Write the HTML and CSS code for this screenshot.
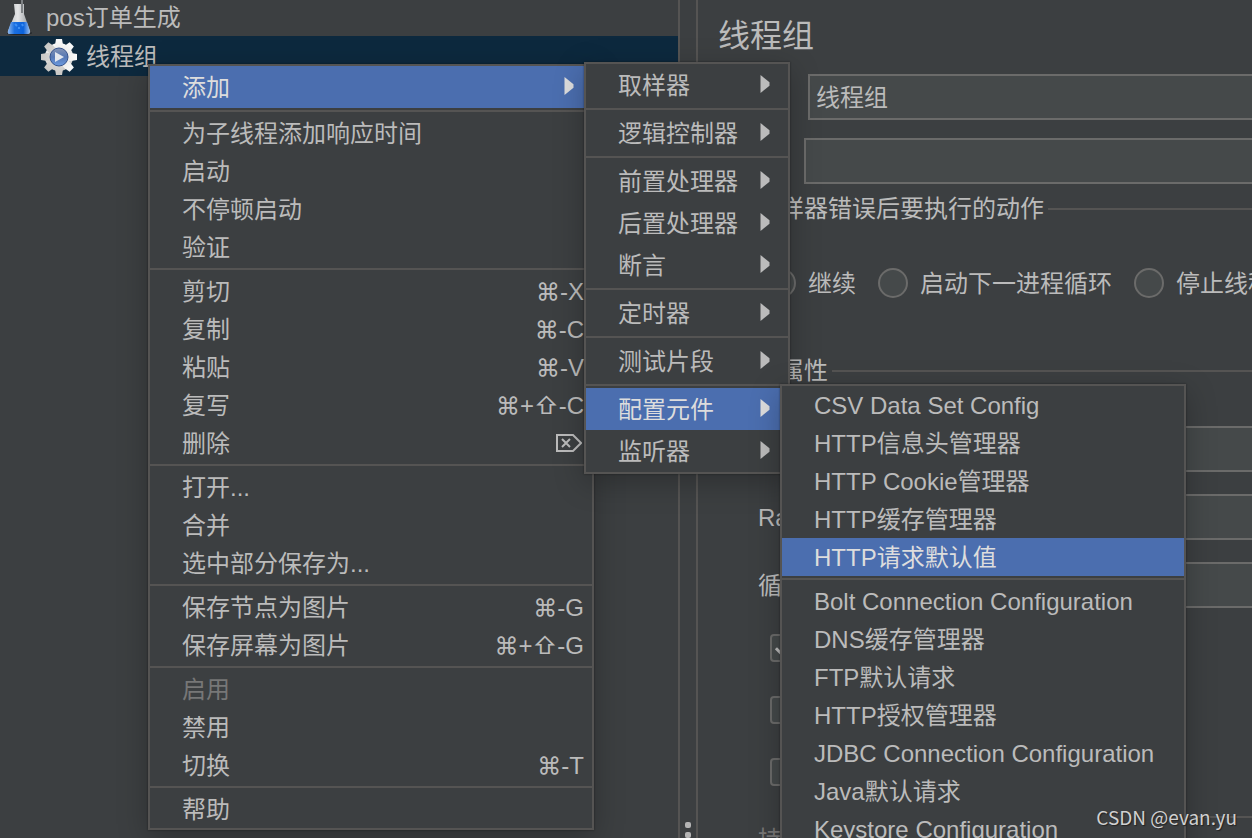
FILE: index.html
```html
<!DOCTYPE html>
<html lang="zh-CN">
<head>
  <meta charset="UTF-8" />
  <meta name="viewport" content="width=device-width, initial-scale=1.0"/>
  <title>线程组</title>
  <link rel="stylesheet" href="styles.css">
</head>
<body>
  <div class="app">
    <ul class="tree">
      <li class="tree-row">
        <svg class="flask" width="26" height="36" viewBox="0 0 26 36">
          <defs>
            <linearGradient id="glass" x1="0" x2="1">
              <stop offset="0" stop-color="#b9bcc0"/>
              <stop offset="0.45" stop-color="#e4e5e6"/>
              <stop offset="1" stop-color="#8e9398"/>
            </linearGradient>
            <linearGradient id="liquid" x1="0" x2="1">
              <stop offset="0" stop-color="#8fb9ee"/>
              <stop offset="0.3" stop-color="#1b6fe0"/>
              <stop offset="0.7" stop-color="#0a62dc"/>
              <stop offset="1" stop-color="#9cc0ee"/>
            </linearGradient>
          </defs>
          <ellipse cx="12" cy="33" rx="13" ry="2" fill="#22262a"/>
          <path d="M7 4h10v10l6 17q1 3-2 3H3q-3 0-2-3L8 14z" fill="url(#glass)"/>
          <path d="M4 22h16l3 9q0 3-3 3H3q-3 0-2-3z" fill="url(#liquid)"/>
          <path d="M15 0v13" stroke="#7d8184" stroke-width="2"/>
          <path d="M8 24l2 2M12 27v2M15 24l1 2" stroke="#3d90f5" stroke-width="2"/>
        </svg>
        <span>pos订单生成</span>
      </li>
      <li class="tree-row child selected">
        <svg class="gear" width="38" height="38" viewBox="-19 -19 38 38">
          <defs>
            <linearGradient id="metal" x1="0" y1="0" x2="0" y2="1">
              <stop offset="0" stop-color="#fbfbfb"/>
              <stop offset="1" stop-color="#c9c7c4"/>
            </linearGradient>
            <linearGradient id="lens" x1="0" y1="0" x2="0" y2="1">
              <stop offset="0" stop-color="#8393b4"/>
              <stop offset="0.5" stop-color="#5577b4"/>
              <stop offset="1" stop-color="#6d9be0"/>
            </linearGradient>
          </defs>
          <g fill="url(#metal)">
            <circle r="14"/>
            <path id="tooth" d="M-4-12l1-6h6l1 6v24l-1 6h-6l-1-6z"/>
            <use href="#tooth" transform="rotate(45)"/>
            <use href="#tooth" transform="rotate(90)"/>
            <use href="#tooth" transform="rotate(135)"/>
          </g>
          <circle r="9" fill="url(#lens)" stroke="#34528c" stroke-width="1"/>
          <path d="M-4-5L5 0l-9 5z" fill="#e3e7ee"/>
        </svg>
        <span>线程组</span>
      </li>
    </ul>

    <div class="splitter"><i></i><i></i></div>

    <main class="panel">
      <h1>线程组</h1>
      <div class="row name-row">
        <label for="name">名称：</label>
        <input type="text" id="name" value="线程组" />
      </div>
      <div class="row comment-row">
        <label for="comment">注释：</label>
        <input type="text" id="comment" />
      </div>

      <h2>在取样器错误后要执行的动作</h2>
      <div class="radios">
        <label><input type="radio" name="onError" />继续</label>
        <label><input type="radio" name="onError" />启动下一进程循环</label>
        <label><input type="radio" name="onError" />停止线程</label>
      </div>

      <h2>线程属性</h2>
      <div class="props">
        <div class="row">
          <label for="threads">线程数：</label>
          <input type="text" id="threads" />
        </div>
        <div class="row">
          <label for="ramp">Ramp-Up：</label>
          <input type="text" id="ramp" />
        </div>
        <div class="row">
          <label for="loops">循环次数</label>
          <input type="text" id="loops" />
        </div>
      </div>
      <div class="checks">
        <input type="checkbox" aria-label="Same user on each iteration" checked />
        <input type="checkbox" aria-label="延迟创建线程直到需要" />
        <input type="checkbox" aria-label="调度器" />
      </div>
      <div class="row disabled">
        <label for="duration">持续时间</label>
        <input type="text" id="duration" disabled />
      </div>
    </main>
  </div>

  <div class="menu menu-main" role="menu">
    <button class="item tall active">添加<svg class="arrow" viewBox="0 0 10 20"><path d="M0 0l10 8v4L0 20z"/></svg></button>
    <hr>
    <button class="item">为子线程添加响应时间</button>
    <button class="item">启动</button>
    <button class="item">不停顿启动</button>
    <button class="item">验证</button>
    <hr>
    <button class="item">剪切<kbd>⌘-X</kbd></button>
    <button class="item">复制<kbd>⌘-C</kbd></button>
    <button class="item">粘贴<kbd>⌘-V</kbd></button>
    <button class="item">复写<kbd>⌘+⇧-C</kbd></button>
    <button class="item">删除<svg class="delete" viewBox="0 0 26 18"><path d="M1 1h16l8 8-8 8H1zM6 5l8 8M14 5l-8 8"/></svg></button>
    <hr>
    <button class="item">打开...</button>
    <button class="item">合并</button>
    <button class="item">选中部分保存为...</button>
    <hr>
    <button class="item">保存节点为图片<kbd>⌘-G</kbd></button>
    <button class="item">保存屏幕为图片<kbd>⌘+⇧-G</kbd></button>
    <hr>
    <button class="item" disabled>启用</button>
    <button class="item">禁用</button>
    <button class="item">切换<kbd>⌘-T</kbd></button>
    <hr>
    <button class="item">帮助</button>
  </div>

  <div class="menu menu-add" role="menu">
    <button class="item tall">取样器<svg class="arrow" viewBox="0 0 10 20"><path d="M0 0l10 8v4L0 20z"/></svg></button>
    <hr>
    <button class="item tall">逻辑控制器<svg class="arrow" viewBox="0 0 10 20"><path d="M0 0l10 8v4L0 20z"/></svg></button>
    <hr>
    <button class="item tall">前置处理器<svg class="arrow" viewBox="0 0 10 20"><path d="M0 0l10 8v4L0 20z"/></svg></button>
    <button class="item tall">后置处理器<svg class="arrow" viewBox="0 0 10 20"><path d="M0 0l10 8v4L0 20z"/></svg></button>
    <button class="item tall">断言<svg class="arrow" viewBox="0 0 10 20"><path d="M0 0l10 8v4L0 20z"/></svg></button>
    <hr>
    <button class="item tall">定时器<svg class="arrow" viewBox="0 0 10 20"><path d="M0 0l10 8v4L0 20z"/></svg></button>
    <hr>
    <button class="item tall">测试片段<svg class="arrow" viewBox="0 0 10 20"><path d="M0 0l10 8v4L0 20z"/></svg></button>
    <hr>
    <button class="item tall active">配置元件<svg class="arrow" viewBox="0 0 10 20"><path d="M0 0l10 8v4L0 20z"/></svg></button>
    <button class="item tall">监听器<svg class="arrow" viewBox="0 0 10 20"><path d="M0 0l10 8v4L0 20z"/></svg></button>
  </div>

  <div class="menu menu-config" role="menu">
    <button class="item">CSV Data Set Config</button>
    <button class="item">HTTP信息头管理器</button>
    <button class="item">HTTP Cookie管理器</button>
    <button class="item">HTTP缓存管理器</button>
    <button class="item active">HTTP请求默认值</button>
    <hr>
    <button class="item">Bolt Connection Configuration</button>
    <button class="item">DNS缓存管理器</button>
    <button class="item">FTP默认请求</button>
    <button class="item">HTTP授权管理器</button>
    <button class="item">JDBC Connection Configuration</button>
    <button class="item">Java默认请求</button>
    <button class="item">Keystore Configuration</button>
  </div>

  <div class="watermark">CSDN @evan.yu</div>
</body>
</html>
```
FILE: styles.css
```css
:root {
  --bg: #3c3f41;
  --field: #45494a;
  --field-border: #6b6b6a;
  --line: #555453;
  --text: #bbbbbb;
  --active: #4b6eaf;
  --tree-active: #0d293e;
}

* {
  box-sizing: border-box;
}

body {
  margin: 0;
  height: 100vh;
  overflow: hidden;
  position: relative;
  background: var(--bg);
  color: var(--text);
  font-family: "Liberation Sans", "Noto Sans CJK SC", sans-serif;
  font-size: 24px;
  line-height: 30px;
}

button, input, kbd {
  font: inherit;
  color: inherit;
}

.app {
  display: flex;
  height: 100vh;
  overflow: hidden;
}

/* Test plan tree */
.tree {
  flex: 0 0 680px;
  margin: 0;
  padding: 0;
  list-style: none;
  border-right: 2px solid var(--line);
}

.tree-row {
  display: flex;
  align-items: center;
  gap: 13px;
  height: 36px;
  padding-left: 7px;
}

.tree-row.child {
  gap: 8px;
  height: 40px;
  padding: 2px 0 0 40px;
}

.tree-row.selected {
  background: var(--tree-active);
}

.splitter {
  flex: 0 0 16px;
  display: flex;
  flex-direction: column;
  align-items: center;
  justify-content: flex-end;
  gap: 4px;
}

.splitter i {
  flex: none;
  width: 6px;
  height: 6px;
  border-radius: 2px;
  background: #b4b4b4;
}

/* Thread group form */
.panel {
  flex: 1;
  min-width: 0;
  padding: 16px 0 0 20px;
  border-left: 2px solid var(--line);
  white-space: nowrap;
}

h1 {
  margin: 0 0 18px;
  font-size: 32px;
  font-weight: normal;
  line-height: 40px;
}

.row {
  display: flex;
  align-items: center;
}

.row label {
  flex: none;
  padding-top: 2px;
}

input[type="text"] {
  flex: 1;
  min-width: 0;
  height: 46px;
  padding: 0 6px 4px;
  background: var(--field);
  border: 2px solid var(--field-border);
  border-right: none;
  border-radius: 0;
}

.name-row {
  gap: 18px;
  margin-bottom: 18px;
}

.comment-row {
  gap: 14px;
  margin-bottom: 10px;
}

h2 {
  display: flex;
  align-items: center;
  gap: 4px;
  margin: 0;
  padding-left: 14px;
  font-size: 24px;
  font-weight: normal;
  line-height: 30px;
}

h2::after {
  content: "";
  flex: 1;
  height: 2px;
  background: var(--line);
}

.radios {
  display: flex;
  gap: 22px;
  margin: 44px 0 58px;
  padding-left: 48px;
}

.radios label {
  display: flex;
  gap: 12px;
  height: 30px;
  line-height: 32px;
}

input[type="radio"],
input[type="checkbox"] {
  appearance: none;
  flex: none;
  margin: 0;
  background: var(--field);
  border: 2px solid var(--field-border);
}

input[type="radio"] {
  width: 30px;
  height: 30px;
  border-radius: 50%;
}

input[type="checkbox"] {
  width: 28px;
  height: 28px;
  border-radius: 4px;
}

input[type="checkbox"]:checked::before {
  content: "";
  display: block;
  width: 16px;
  height: 8px;
  margin: 5px 0 0 4px;
  border: solid var(--text);
  border-width: 0 0 3px 3px;
  transform: rotate(-45deg);
}

.props {
  display: flex;
  flex-direction: column;
  gap: 22px;
  margin: 40px 0 26px;
  padding-left: 40px;
}

.props label {
  width: 240px;
}

.checks {
  display: flex;
  flex-direction: column;
  gap: 34px;
  margin-bottom: 30px;
  padding-left: 52px;
}

.disabled {
  padding-left: 40px;
  color: #777777;
}

.disabled label {
  width: 240px;
}

.disabled input {
  background: var(--bg);
  border-color: var(--line);
}

/* Popup menus */
.menu {
  position: absolute;
  background: var(--bg);
  border: 2px solid var(--line);
  box-shadow: 0 0 2px rgba(0, 0, 0, 0.4), 0 8px 28px rgba(0, 0, 0, 0.25);
}

.menu-main {
  left: 148px;
  top: 64px;
  width: 446px;
}

.menu-add {
  left: 584px;
  top: 62px;
  width: 206px;
}

.menu-config {
  left: 780px;
  top: 384px;
  width: 406px;
}

.item {
  display: flex;
  align-items: center;
  justify-content: space-between;
  width: 100%;
  height: 38px;
  padding: 2px 8px 0 32px;
  background: none;
  border: none;
  text-align: left;
  white-space: nowrap;
}

.item.tall {
  height: 42px;
  padding-right: 18px;
}

.item.active {
  background: var(--active);
  color: #dddddd;
}

.item:disabled {
  color: #777777;
}

.menu hr {
  height: 2px;
  margin: 2px 0;
  border: none;
  background: var(--line);
}

.arrow {
  width: 10px;
  height: 18px;
  margin-bottom: 4px;
  fill: currentColor;
}

.delete {
  width: 26px;
  height: 18px;
  margin: 0 2px 2px 0;
  fill: none;
  stroke: currentColor;
  stroke-width: 2;
}

kbd {
  font-family: "Liberation Sans", "Inter", "DejaVu Sans", sans-serif;
}

.watermark {
  position: absolute;
  right: 15px;
  bottom: 6px;
  font-family: "Noto Sans CJK SC", sans-serif;
  font-size: 19px;
  color: #d0d0d0;
  text-shadow: 1px 1px 1px #222222;
}
```
